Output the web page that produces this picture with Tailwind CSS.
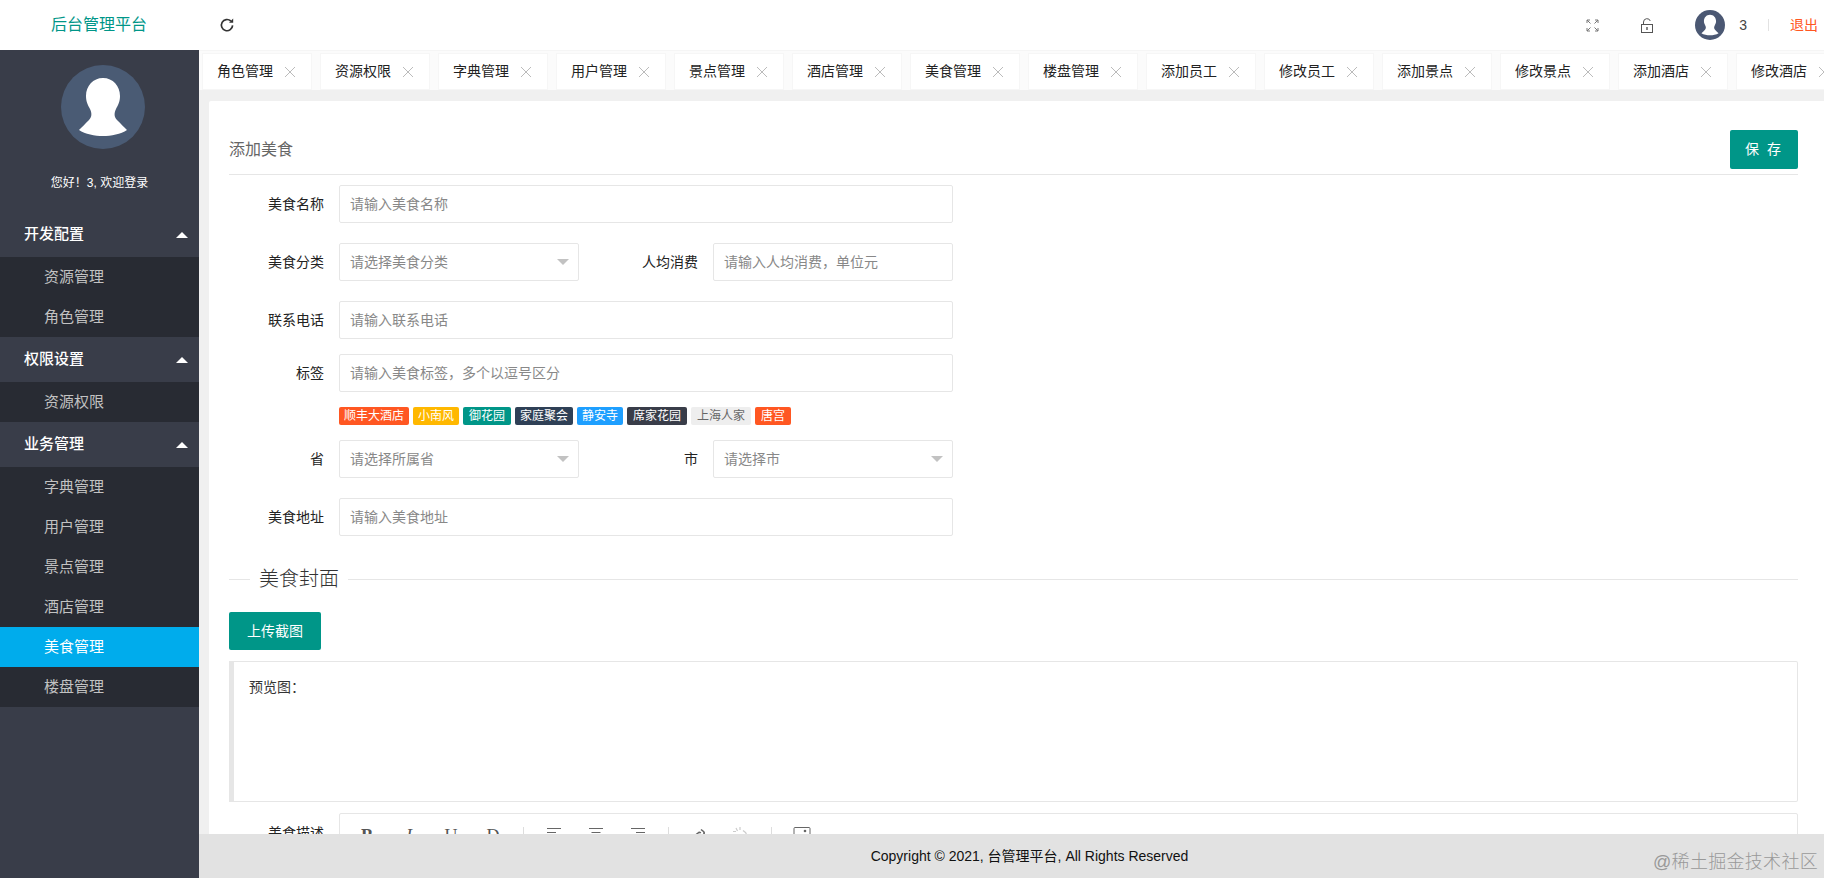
<!DOCTYPE html>
<html lang="zh-CN">
<head>
<meta charset="utf-8">
<title>后台管理平台</title>
<script src="https://cdn.jsdelivr.net/npm/@tailwindcss/browser@4"></script>
</head>
<body class="h-screen overflow-hidden bg-white text-[14px] text-[#333] font-['Liberation_Sans','Noto_Sans_CJK_SC',sans-serif]">
<div class="relative flex h-screen flex-col overflow-hidden">
  <!-- Header -->
  <header class="flex h-[50px] shrink-0 items-center bg-white">
    <div class="w-[199px] shrink-0 text-center text-[16px] text-[#009688] pr-[1px]">后台管理平台</div>
    <svg class="ml-[20px] h-[16px] w-[16px]" viewBox="0 0 16 16" fill="none" stroke="#333" stroke-width="1.7"><path d="M13.6 8.4A5.6 5.6 0 1 1 11.8 4"/><path d="M14.2 1.6v4.2H10" fill="#333" stroke="none"/></svg>
    <div class="ml-auto flex items-center">
      <svg class="h-[13px] w-[13px]" viewBox="0 0 13 13" fill="none" stroke="#777" stroke-width="1"><path d="M1 4V1h3M1 1l3.5 3.5M12 4V1H9M12 1L8.500 4.500M1 9v3h3M1 12l3.500-3.500M12 9v3H9M12 12L8.500 8.500"/></svg>
      <svg class="ml-[41px] h-[15px] w-[14px]" viewBox="0 0 14 15" fill="none" stroke="#555" stroke-width="1"><rect x="1.500" y="6.500" width="11" height="8"/><path d="M3.500 6.500V4a3.500 3.500 0 0 1 6.800-1"/><rect x="6.300" y="9" width="1.400" height="3" fill="#555" stroke="none"/></svg>
      <svg class="ml-[41px] h-[30px] w-[30px]" viewBox="0 0 84 84"><circle cx="42" cy="42" r="42" fill="#4b5873"/><path fill="#fff" d="M42 13C52 13 59 21 59 31C59 37 57 40 55 44C53 48 53 52 56 55C60 59 63 62 66 65C60 69 50 71 42 71C34 71 24 69 18 65C21 62 24 59 28 55C31 52 31 48 29 44C27 40 25 37 25 31C25 21 32 13 42 13Z"/></svg>
      <span class="ml-[14px] text-[14px] text-[#444]">3</span>
      <span class="ml-[21px] h-[12px] w-[1px] bg-[#e2e2e2]"></span>
      <span class="ml-[21px] mr-[6px] text-[14px] text-[#ff5722]">退出</span>
    </div>
  </header>

  <div class="flex min-h-0 flex-1">
    <!-- Sidebar -->
    <aside class="flex w-[199px] shrink-0 flex-col bg-[#393d49]">
      <div class="flex justify-center pt-[15px]">
        <svg class="h-[84px] w-[84px] -translate-x-[-3px]" viewBox="0 0 84 84"><circle cx="42" cy="42" r="42" fill="#4a5b74"/><path fill="#fff" d="M42 13C52 13 59 21 59 31C59 37 57 40 55 44C53 48 53 52 56 55C60 59 63 62 66 65C60 69 50 71 42 71C34 71 24 69 18 65C21 62 24 59 28 55C31 52 31 48 29 44C27 40 25 37 25 31C25 21 32 13 42 13Z"/></svg>
      </div>
      <div class="mt-[25px] h-[18px] text-center text-[12px] leading-[18px] text-white">您好！3, 欢迎登录</div>
      <nav class="mt-[20px] text-[15px]">
        <div class="flex h-[45px] items-center justify-between pl-[24px] pr-[11px] font-medium text-white">开发配置<span class="h-0 w-0 border-x-[6px] border-b-[6px] border-x-transparent border-b-white"></span></div>
        <div class="bg-[#282b33] text-[#c2c2c2]">
          <div class="flex h-[40px] items-center pl-[44px]">资源管理</div>
          <div class="flex h-[40px] items-center pl-[44px]">角色管理</div>
        </div>
        <div class="flex h-[45px] items-center justify-between pl-[24px] pr-[11px] font-medium text-white">权限设置<span class="h-0 w-0 border-x-[6px] border-b-[6px] border-x-transparent border-b-white"></span></div>
        <div class="bg-[#282b33] text-[#c2c2c2]">
          <div class="flex h-[40px] items-center pl-[44px]">资源权限</div>
        </div>
        <div class="flex h-[45px] items-center justify-between pl-[24px] pr-[11px] font-medium text-white">业务管理<span class="h-0 w-0 border-x-[6px] border-b-[6px] border-x-transparent border-b-white"></span></div>
        <div class="bg-[#282b33] text-[#c2c2c2]">
          <div class="flex h-[40px] items-center pl-[44px]">字典管理</div>
          <div class="flex h-[40px] items-center pl-[44px]">用户管理</div>
          <div class="flex h-[40px] items-center pl-[44px]">景点管理</div>
          <div class="flex h-[40px] items-center pl-[44px]">酒店管理</div>
          <div class="flex h-[40px] items-center bg-[#00acec] pl-[44px] text-white">美食管理</div>
          <div class="flex h-[40px] items-center pl-[44px]">楼盘管理</div>
        </div>
      </nav>
    </aside>

    <!-- Right column -->
    <div class="flex min-w-0 flex-1 flex-col bg-[#f0f0f0]">
      <!-- Tabs -->
      <div class="flex h-[40px] shrink-0 gap-[8px] overflow-hidden border-t border-[#f5f5f5] bg-[#fbfbfb] pl-[3px] pt-[2px]">
        <div class="flex h-[37px] w-[110px] shrink-0 items-center justify-between border border-[#f6f6f6] bg-white pl-[14px] pr-[16px] text-[#222]">角色管理<svg class="h-[10px] w-[10px]" viewBox="0 0 10 10" stroke="#bbb" stroke-width="1"><path d="M0 0L10 10M10 0L0 10"/></svg></div>
        <div class="flex h-[37px] w-[110px] shrink-0 items-center justify-between border border-[#f6f6f6] bg-white pl-[14px] pr-[16px] text-[#222]">资源权限<svg class="h-[10px] w-[10px]" viewBox="0 0 10 10" stroke="#bbb" stroke-width="1"><path d="M0 0L10 10M10 0L0 10"/></svg></div>
        <div class="flex h-[37px] w-[110px] shrink-0 items-center justify-between border border-[#f6f6f6] bg-white pl-[14px] pr-[16px] text-[#222]">字典管理<svg class="h-[10px] w-[10px]" viewBox="0 0 10 10" stroke="#bbb" stroke-width="1"><path d="M0 0L10 10M10 0L0 10"/></svg></div>
        <div class="flex h-[37px] w-[110px] shrink-0 items-center justify-between border border-[#f6f6f6] bg-white pl-[14px] pr-[16px] text-[#222]">用户管理<svg class="h-[10px] w-[10px]" viewBox="0 0 10 10" stroke="#bbb" stroke-width="1"><path d="M0 0L10 10M10 0L0 10"/></svg></div>
        <div class="flex h-[37px] w-[110px] shrink-0 items-center justify-between border border-[#f6f6f6] bg-white pl-[14px] pr-[16px] text-[#222]">景点管理<svg class="h-[10px] w-[10px]" viewBox="0 0 10 10" stroke="#bbb" stroke-width="1"><path d="M0 0L10 10M10 0L0 10"/></svg></div>
        <div class="flex h-[37px] w-[110px] shrink-0 items-center justify-between border border-[#f6f6f6] bg-white pl-[14px] pr-[16px] text-[#222]">酒店管理<svg class="h-[10px] w-[10px]" viewBox="0 0 10 10" stroke="#bbb" stroke-width="1"><path d="M0 0L10 10M10 0L0 10"/></svg></div>
        <div class="flex h-[37px] w-[110px] shrink-0 items-center justify-between border border-[#f6f6f6] bg-white pl-[14px] pr-[16px] text-[#222]">美食管理<svg class="h-[10px] w-[10px]" viewBox="0 0 10 10" stroke="#bbb" stroke-width="1"><path d="M0 0L10 10M10 0L0 10"/></svg></div>
        <div class="flex h-[37px] w-[110px] shrink-0 items-center justify-between border border-[#f6f6f6] bg-white pl-[14px] pr-[16px] text-[#222]">楼盘管理<svg class="h-[10px] w-[10px]" viewBox="0 0 10 10" stroke="#bbb" stroke-width="1"><path d="M0 0L10 10M10 0L0 10"/></svg></div>
        <div class="flex h-[37px] w-[110px] shrink-0 items-center justify-between border border-[#f6f6f6] bg-white pl-[14px] pr-[16px] text-[#222]">添加员工<svg class="h-[10px] w-[10px]" viewBox="0 0 10 10" stroke="#bbb" stroke-width="1"><path d="M0 0L10 10M10 0L0 10"/></svg></div>
        <div class="flex h-[37px] w-[110px] shrink-0 items-center justify-between border border-[#f6f6f6] bg-white pl-[14px] pr-[16px] text-[#222]">修改员工<svg class="h-[10px] w-[10px]" viewBox="0 0 10 10" stroke="#bbb" stroke-width="1"><path d="M0 0L10 10M10 0L0 10"/></svg></div>
        <div class="flex h-[37px] w-[110px] shrink-0 items-center justify-between border border-[#f6f6f6] bg-white pl-[14px] pr-[16px] text-[#222]">添加景点<svg class="h-[10px] w-[10px]" viewBox="0 0 10 10" stroke="#bbb" stroke-width="1"><path d="M0 0L10 10M10 0L0 10"/></svg></div>
        <div class="flex h-[37px] w-[110px] shrink-0 items-center justify-between border border-[#f6f6f6] bg-white pl-[14px] pr-[16px] text-[#222]">修改景点<svg class="h-[10px] w-[10px]" viewBox="0 0 10 10" stroke="#bbb" stroke-width="1"><path d="M0 0L10 10M10 0L0 10"/></svg></div>
        <div class="flex h-[37px] w-[110px] shrink-0 items-center justify-between border border-[#f6f6f6] bg-white pl-[14px] pr-[16px] text-[#222]">添加酒店<svg class="h-[10px] w-[10px]" viewBox="0 0 10 10" stroke="#bbb" stroke-width="1"><path d="M0 0L10 10M10 0L0 10"/></svg></div>
        <div class="flex h-[37px] w-[110px] shrink-0 items-center justify-between border border-[#f6f6f6] bg-white pl-[14px] pr-[16px] text-[#222]">修改酒店<svg class="h-[10px] w-[10px]" viewBox="0 0 10 10" stroke="#bbb" stroke-width="1"><path d="M0 0L10 10M10 0L0 10"/></svg></div>
      </div>

      <!-- Content -->
      <main class="min-h-0 flex-1 overflow-hidden pl-[10px] pt-[11px]">
        <div class="h-full overflow-hidden rounded-tl-[2px] bg-white pl-[20px] pr-[26px] pt-[29px]">
          <div class="flex items-center justify-between border-b border-[#e6e6e6] pb-[5px]">
            <span class="text-[16px] text-[#666]">添加美食</span>
            <button class="h-[39px] w-[68px] rounded-[2px] bg-[#009688] text-[14px] tracking-[2px] text-white">保 存</button>
          </div>

          <div class="mt-[10px] flex items-center">
            <label class="mr-[15px] w-[95px] text-right text-[#222]">美食名称</label>
            <input class="h-[38px] w-[614px] rounded-[2px] border border-[#e6e6e6] bg-white pl-[10px] placeholder:text-[#888]" placeholder="请输入美食名称">
          </div>

          <div class="mt-[20px] flex items-center">
            <label class="mr-[15px] w-[95px] text-right text-[#222]">美食分类</label>
            <div class="flex h-[38px] w-[240px] items-center justify-between rounded-[2px] border border-[#e6e6e6] pl-[10px] pr-[9px] text-[#888]">请选择美食分类<span class="h-0 w-0 border-x-[6px] border-t-[6px] border-x-transparent border-t-[#c2c2c2]"></span></div>
            <label class="mr-[15px] w-[119px] text-right text-[#222]">人均消费</label>
            <input class="h-[38px] w-[240px] rounded-[2px] border border-[#e6e6e6] bg-white pl-[10px] placeholder:text-[#888]" placeholder="请输入人均消费，单位元">
          </div>

          <div class="mt-[20px] flex items-center">
            <label class="mr-[15px] w-[95px] text-right text-[#222]">联系电话</label>
            <input class="h-[38px] w-[614px] rounded-[2px] border border-[#e6e6e6] bg-white pl-[10px] placeholder:text-[#888]" placeholder="请输入联系电话">
          </div>

          <div class="mt-[15px] flex items-center">
            <label class="mr-[15px] w-[95px] text-right text-[#222]">标签</label>
            <input class="h-[38px] w-[614px] rounded-[2px] border border-[#e6e6e6] bg-white pl-[10px] placeholder:text-[#888]" placeholder="请输入美食标签，多个以逗号区分">
          </div>

          <div class="ml-[110px] mt-[15px] flex h-[18px] gap-[4px] text-[12px] leading-[18px]">
            <span class="rounded-[2px] bg-[#ff5722] px-[5px] text-white">顺丰大酒店</span>
            <span class="rounded-[2px] bg-[#ffb800] px-[5px] text-white">小南风</span>
            <span class="rounded-[2px] bg-[#009688] px-[6px] text-white">御花园</span>
            <span class="rounded-[2px] bg-[#2f4056] px-[5px] text-white">家庭聚会</span>
            <span class="rounded-[2px] bg-[#1e9fff] px-[5px] text-white">静安寺</span>
            <span class="rounded-[2px] bg-[#393d49] px-[6px] text-white">席家花园</span>
            <span class="rounded-[2px] bg-[#eeeeee] px-[6px] text-[#666]">上海人家</span>
            <span class="rounded-[2px] bg-[#ff5722] px-[6px] text-white">唐宫</span>
          </div>

          <div class="mt-[15px] flex items-center">
            <label class="mr-[15px] w-[95px] text-right text-[#222]">省</label>
            <div class="flex h-[38px] w-[240px] items-center justify-between rounded-[2px] border border-[#e6e6e6] pl-[10px] pr-[9px] text-[#888]">请选择所属省<span class="h-0 w-0 border-x-[6px] border-t-[6px] border-x-transparent border-t-[#c2c2c2]"></span></div>
            <label class="mr-[15px] w-[119px] text-right text-[#222]">市</label>
            <div class="flex h-[38px] w-[240px] items-center justify-between rounded-[2px] border border-[#e6e6e6] pl-[10px] pr-[9px] text-[#888]">请选择市<span class="h-0 w-0 border-x-[6px] border-t-[6px] border-x-transparent border-t-[#c2c2c2]"></span></div>
          </div>

          <div class="mt-[20px] flex items-center">
            <label class="mr-[15px] w-[95px] text-right text-[#222]">美食地址</label>
            <input class="h-[38px] w-[614px] rounded-[2px] border border-[#e6e6e6] bg-white pl-[10px] placeholder:text-[#888]" placeholder="请输入美食地址">
          </div>

          <div class="mt-[28px] flex h-[30px] items-center">
            <span class="h-[1px] w-[21px] bg-[#e6e6e6]"></span>
            <span class="px-[9px] text-[20px] font-light text-[#333]">美食封面</span>
            <span class="h-[1px] flex-1 bg-[#e6e6e6]"></span>
          </div>

          <button class="mt-[18px] block h-[38px] w-[92px] rounded-[2px] bg-[#009688] text-[14px] text-white">上传截图</button>

          <div class="mt-[11px] h-[141px] rounded-r-[2px] border border-l-[5px] border-[#e6e6e6] pl-[15px] pt-[15px] text-[#333]">预览图：</div>

          <div class="mt-[11px] flex">
            <label class="mr-[15px] w-[95px] pt-[10px] text-right text-[#222]">美食描述</label>
            <div class="flex h-[200px] flex-1 items-start rounded-[2px] border border-[#e6e6e6] pl-[6px] pt-[13px] text-[#555]">
              <span class="flex h-[18px] w-[42px] items-center justify-center font-['Liberation_Serif',serif] text-[18px] font-bold">B</span>
              <span class="flex h-[18px] w-[42px] items-center justify-center font-['Liberation_Serif',serif] text-[18px] italic">I</span>
              <span class="flex h-[18px] w-[42px] items-center justify-center font-['Liberation_Serif',serif] text-[18px] underline">U</span>
              <span class="flex h-[18px] w-[42px] items-center justify-center font-['Liberation_Serif',serif] text-[18px] line-through">D</span>
              <span class="mx-[9px] h-[20px] w-[1px] bg-[#ddd]"></span>
              <span class="flex w-[42px] justify-center"><svg class="h-[16px] w-[16px]" viewBox="0 0 16 16" stroke="#666"><path d="M1 1.500H15M1 5.500H10M1 9.500H15M1 13.500H10"/></svg></span>
              <span class="flex w-[42px] justify-center"><svg class="h-[16px] w-[16px]" viewBox="0 0 16 16" stroke="#666"><path d="M1 1.500H15M3.500 5.500H12.500M1 9.500H15M3.500 13.500H12.500"/></svg></span>
              <span class="flex w-[42px] justify-center"><svg class="h-[16px] w-[16px]" viewBox="0 0 16 16" stroke="#666"><path d="M1 1.500H15M6 5.500H15M1 9.500H15M6 13.500H15"/></svg></span>
              <span class="mx-[9px] h-[20px] w-[1px] bg-[#ddd]"></span>
              <span class="flex w-[42px] justify-center"><svg class="h-[16px] w-[16px]" viewBox="0 0 16 16" fill="none" stroke="#666" stroke-width="1.600"><path d="M10 2.500l2.500 2a2 2 0 0 1 0 2.800L9.500 10a2 2 0 0 1-2.800 0M6.500 13.500l-2.500-2a2 2 0 0 1 0-2.800L7 6a2 2 0 0 1 2.800 0"/></svg></span>
              <span class="flex w-[42px] justify-center"><svg class="h-[16px] w-[16px]" viewBox="0 0 16 16" fill="none" stroke="#ccc" stroke-width="1.200"><path d="M10 3.500l2.500 2a2 2 0 0 1 0 2.800L10 11M3 1l1.500 3M7 0v3M0 4.500h3"/></svg></span>
              <span class="mx-[9px] h-[20px] w-[1px] bg-[#ddd]"></span>
              <span class="flex w-[42px] justify-center"><svg class="h-[16px] w-[18px]" viewBox="0 0 18 16" fill="none" stroke="#666"><rect x="1" y="0.500" width="16" height="14" rx="1"/><circle cx="12" cy="4" r="1.300" fill="#666" stroke="none"/></svg></span>
            </div>
          </div>
        </div>
      </main>

      <!-- Footer -->
      <footer class="flex h-[44px] shrink-0 items-center justify-center bg-[#e2e2e2] pl-[36px] text-[14px] text-[#111]">Copyright © 2021, 台管理平台, All Rights Reserved</footer>
    </div>
  </div>

  <!-- Watermark overlay -->
  <div class="absolute bottom-[6px] right-[6px] text-[18px] font-light leading-[20px] tracking-[0.3px] text-[#999]">@稀土掘金技术社区</div>
</div>
</body>
</html>
